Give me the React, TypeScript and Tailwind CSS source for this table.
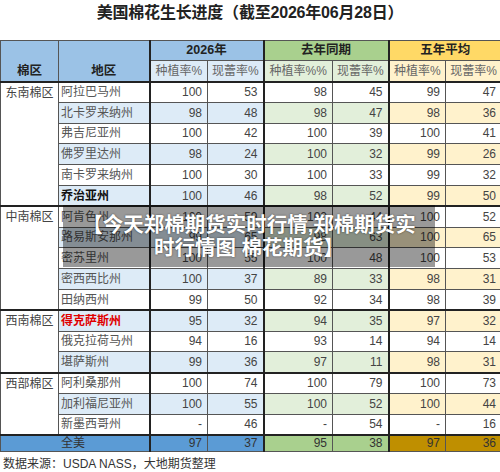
type Item = { name: string; tone?: "bold" | "red"; v: string[] };
type Zone = { zone: string; items: Item[] };

const zones: Zone[] = [
  {
    zone: "东南棉区",
    items: [
      { name: "阿拉巴马州", v: ["100", "53", "98", "45", "99", "47"] },
      { name: "北卡罗来纳州", v: ["98", "48", "98", "47", "98", "36"] },
      { name: "弗吉尼亚州", v: ["100", "42", "100", "39", "100", "41"] },
      { name: "佛罗里达州", v: ["98", "24", "100", "32", "99", "26"] },
      { name: "南卡罗来纳州", v: ["100", "30", "100", "33", "99", "32"] },
      { name: "乔治亚州", tone: "bold", v: ["100", "46", "98", "52", "99", "50"] },
    ],
  },
  {
    zone: "中南棉区",
    items: [
      { name: "阿肯色州", v: ["100", "59", "100", "44", "100", "52"] },
      { name: "路易斯安那州", v: ["99", "65", "98", "63", "100", "65"] },
      { name: "密苏里州", v: ["100", "55", "100", "48", "100", "53"] },
      { name: "密西西比州", v: ["100", "37", "89", "33", "98", "31"] },
      { name: "田纳西州", v: ["99", "50", "92", "34", "98", "39"] },
    ],
  },
  {
    zone: "西南棉区",
    items: [
      { name: "得克萨斯州", tone: "red", v: ["95", "32", "94", "35", "97", "32"] },
      { name: "俄克拉荷马州", v: ["94", "16", "93", "14", "94", "14"] },
      { name: "堪萨斯州", v: ["99", "36", "97", "11", "98", "31"] },
    ],
  },
  {
    zone: "西部棉区",
    items: [
      { name: "阿利桑那州", v: ["100", "74", "100", "79", "100", "73"] },
      { name: "加利福尼亚州", v: ["100", "55", "100", "52", "100", "44"] },
      { name: "新墨西哥州", v: ["-", "46", "-", "54", "-", "16"] },
    ],
  },
];

const tint = ["bg-[#ddebf7]", "bg-[#ddebf7]", "bg-[#e2efda]", "bg-[#e2efda]", "bg-[#fff2cc]", "bg-[#fff2cc]"];
const groupEdge = ["border-l-2 border-l-[#222]", "", "border-l-2 border-l-[#222]", "", "border-l-2 border-l-[#222]", ""];

const font = { fontFamily: '"Liberation Sans", "Noto Sans CJK SC", sans-serif' };

export default function App() {
  let idx = 0;
  return (
    <div className="relative h-[472px] w-[500px] overflow-hidden bg-white text-[#333]" style={font}>
      <div className="flex h-[40px] justify-center pt-[2px]">
        <h1 className="text-[16px] font-bold leading-[22px] tracking-[-0.2px] text-[#222]">
          美国棉花生长进度（截至2026年06月28日）
        </h1>
      </div>

      <table className="w-[501px] table-fixed border-collapse text-[12px] leading-none">
        <colgroup>
          <col className="w-[58px]" />
          <col className="w-[91px]" />
          <col className="w-[58px]" />
          <col className="w-[56px]" />
          <col className="w-[69px]" />
          <col className="w-[56px]" />
          <col className="w-[57px]" />
          <col className="w-[56px]" />
        </colgroup>
        <thead>
          <tr className="h-[20px]">
            <th rowSpan={2} className="border border-[#555] bg-[#9bc2e6] pb-[3px] align-bottom text-[12.5px] font-bold text-[#222]">
              棉区
            </th>
            <th rowSpan={2} className="border border-[#555] bg-[#9bc2e6] pb-[3px] align-bottom text-[12.5px] font-bold text-[#222]">
              地区
            </th>
            <th colSpan={2} className="border border-[#555] border-l-2 border-l-[#222] bg-[#9bc2e6] text-[12.5px] font-bold text-[#222]">
              2026年
            </th>
            <th colSpan={2} className="border border-[#555] border-l-2 border-l-[#222] bg-[#a9d08e] text-[12.5px] font-bold text-[#222]">
              去年同期
            </th>
            <th colSpan={2} className="border border-[#555] border-l-2 border-l-[#222] bg-[#ffd966] text-[12.5px] font-bold text-[#222]">
              五年平均
            </th>
          </tr>
          <tr className="h-[21px]">
            {["种植率%", "现蕾率%", "种植率%%", "现蕾率%", "种植率%", "现蕾率%"].map((t, i) => (
              <th key={i} className={`border border-[#555] ${groupEdge[i]} ${tint[i]} text-[12px] font-normal text-[#666]`}>
                {t}
              </th>
            ))}
          </tr>
        </thead>
        <tbody>
          {zones.map((z) =>
            z.items.map((it, j) => {
              idx += 1;
              const shaded = idx % 2 === 0;
              const top = j === 0 ? "border-t-2 border-t-[#222]" : "";
              const nameColor =
                it.tone === "bold" ? "font-bold text-[#111]" : it.tone === "red" ? "font-bold text-[#e00000]" : "text-[#555]";
              return (
                <tr key={it.name} className="h-[20.8px]">
                  {j === 0 && (
                    <td rowSpan={z.items.length} className="border border-[#555] border-t-2 border-t-[#222] bg-white pt-[4px] text-center align-top text-[12px] text-[#444]">
                      {z.zone}
                    </td>
                  )}
                  <td className={`border border-[#555] ${top} ${shaded ? "bg-[#ddebf7]" : "bg-white"} pl-[2px] text-[12px] ${nameColor}`}>
                    {it.name}
                  </td>
                  {it.v.map((n, k) => (
                    <td
                      key={k}
                      className={`border border-[#555] ${top} ${groupEdge[k]} ${shaded ? tint[k] : "bg-white"} pr-[5px] text-right text-[12px] text-[#444]`}
                    >
                      {n}
                    </td>
                  ))}
                </tr>
              );
            })
          )}
          <tr className="h-[16px]">
            <td colSpan={2} className="border border-[#555] border-t-2 border-t-[#222] bg-[#5b9bd5] pl-[60px] text-[12px] text-[#333]">
              全美
            </td>
            {["97", "37", "95", "38", "97", "36"].map((n, k) => (
              <td
                key={k}
                className={`border border-[#555] border-t-2 border-t-[#222] ${groupEdge[k]} ${
                  k < 2 ? "bg-[#5b9bd5]" : k < 4 ? "bg-[#a9d08e]" : "bg-[#bf8f00]"
                } pr-[5px] text-right text-[12px] text-[#333]`}
              >
                {n}
              </td>
            ))}
          </tr>
        </tbody>
      </table>

      <p className="pl-[3px] pt-[3px] text-[12px] text-[#333]">数据来源：USDA NASS，大地期货整理</p>

      <div className="absolute left-[63px] top-[205px] flex h-[62px] w-[372px] flex-col items-center justify-center bg-black/40 text-center text-[20.5px] font-bold leading-[23px] text-white [text-shadow:0_0_2px_rgba(0,0,0,0.6)]">
        <span>【今天郑棉期货实时行情,郑棉期货实</span>
        <span>时行情图 棉花期货】</span>
      </div>
    </div>
  );
}
